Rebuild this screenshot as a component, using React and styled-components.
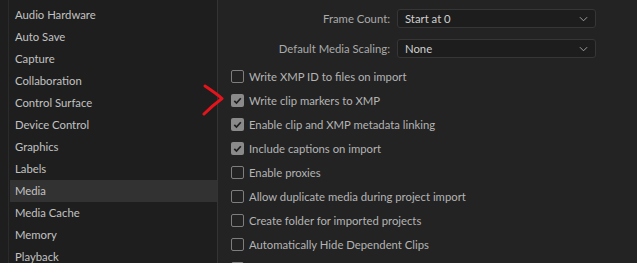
import React from "react";
import styled, { createGlobalStyle } from "styled-components";

const GlobalStyle = createGlobalStyle`
  html, body {
    margin: 0;
    padding: 0;
    background: #232323;
    overflow: hidden;
  }
  body {
    font-family: Lato, "Open Sans", sans-serif;
  }
`;

const categories = [
  "Audio Hardware",
  "Auto Save",
  "Capture",
  "Collaboration",
  "Control Surface",
  "Device Control",
  "Graphics",
  "Labels",
  "Media",
  "Media Cache",
  "Memory",
  "Playback",
];

const options = [
  { label: "Write XMP ID to files on import", checked: false },
  { label: "Write clip markers to XMP", checked: true },
  { label: "Enable clip and XMP metadata linking", checked: true },
  { label: "Include captions on import", checked: true },
  { label: "Enable proxies", checked: false },
  { label: "Allow duplicate media during project import", checked: false },
  { label: "Create folder for imported projects", checked: false },
  { label: "Automatically Hide Dependent Clips", checked: false },
  { label: "", checked: false },
];

export default function App() {
  return (
    <Wrapper>
      <GlobalStyle />
      <Gutter />
      <Sidebar>
        {categories.map((c) => (
          <NavItem key={c} $active={c === "Media"}>
            {c}
          </NavItem>
        ))}
      </Sidebar>
      <Main>
        <Fields>
          <FieldRow>
            <FieldLabel>Frame Count:</FieldLabel>
            <Select>
              <span>Start at 0</span>
              <Chevron />
            </Select>
          </FieldRow>
          <FieldRow>
            <FieldLabel>Default Media Scaling:</FieldLabel>
            <Select>
              <span>None</span>
              <Chevron />
            </Select>
          </FieldRow>
        </Fields>
        <Checks>
          {options.map((o, i) => (
            <CheckRow key={i}>
              <Box $checked={o.checked}>{o.checked && <Tick />}</Box>
              <span>{o.label}</span>
            </CheckRow>
          ))}
        </Checks>
        <Marker viewBox="0 0 26 32">
          <path d="M3 2 C 9 6, 15 10, 20 14.5 C 14 19, 8 24, 2 30" />
        </Marker>
      </Main>
    </Wrapper>
  );
}

function Chevron() {
  return (
    <ChevronSvg viewBox="0 0 10 6">
      <path d="M1 1 L5 5 L9 1" />
    </ChevronSvg>
  );
}

function Tick() {
  return (
    <svg viewBox="0 0 13 13" width="13" height="13">
      <path
        d="M3.3 6.8 L5.5 9 L9.8 4.2"
        fill="none"
        stroke="#1e1e1e"
        strokeWidth="1.7"
      />
    </svg>
  );
}

const Wrapper = styled.div`
  display: flex;
  width: 637px;
  height: 263px;
  overflow: hidden;
  background: #232323;
  font-size: 11.3px;
`;

const Gutter = styled.div`
  width: 8px;
  flex: none;
  background: #1e1e1e;
  border-right: 1px solid #2b2b2b;
`;

const Sidebar = styled.div`
  width: 208px;
  flex: none;
  background: #1e1e1e;
  border-right: 1px solid #343434;
  padding-top: 4px;
  display: flex;
  flex-direction: column;
`;

const NavItem = styled.div`
  height: 22px;
  flex: none;
  line-height: 22px;
  padding-left: 5px;
  margin-left: 1px;
  color: #c2c2c2;
  background: ${(p) => (p.$active ? "#323232" : "transparent")};
  white-space: nowrap;
`;

const Main = styled.div`
  position: relative;
  flex: 1;
  padding: 9px 0 0 13px;
  display: flex;
  flex-direction: column;
`;

const Fields = styled.div`
  display: flex;
  flex-direction: column;
  gap: 11px;
`;

const FieldRow = styled.div`
  display: flex;
  align-items: center;
  justify-content: flex-end;
  gap: 7px;
  width: 365px;
  height: 19px;
`;

const FieldLabel = styled.span`
  color: #aaaaaa;
`;

const Select = styled.div`
  width: 199px;
  height: 19px;
  box-sizing: border-box;
  display: flex;
  align-items: center;
  justify-content: space-between;
  padding: 0 7px;
  background: #1d1d1d;
  border: 1px solid #363636;
  border-radius: 3px;
  color: #d0d0d0;
`;

const ChevronSvg = styled.svg`
  width: 9px;
  height: 6px;
  fill: none;
  stroke: #a0a0a0;
  stroke-width: 1.1;
`;

const Checks = styled.div`
  display: flex;
  flex-direction: column;
  margin-top: 6px;
`;

const CheckRow = styled.div`
  display: flex;
  align-items: center;
  gap: 5px;
  height: 24px;
  flex: none;
  color: #b4b4b4;
  white-space: nowrap;
`;

const Box = styled.div`
  width: 13px;
  height: 13px;
  box-sizing: border-box;
  flex: none;
  border-radius: 2px;
  border: ${(p) => (p.$checked ? "none" : "1.5px solid #7e7e7e")};
  background: ${(p) => (p.$checked ? "#8a8a8a" : "transparent")};
  display: flex;
`;

const Marker = styled.svg`
  position: absolute;
  left: -16px;
  top: 84px;
  width: 26px;
  height: 32px;
  fill: none;
  stroke: #e3141c;
  stroke-width: 3;
  stroke-linecap: round;
  stroke-linejoin: round;
`;
